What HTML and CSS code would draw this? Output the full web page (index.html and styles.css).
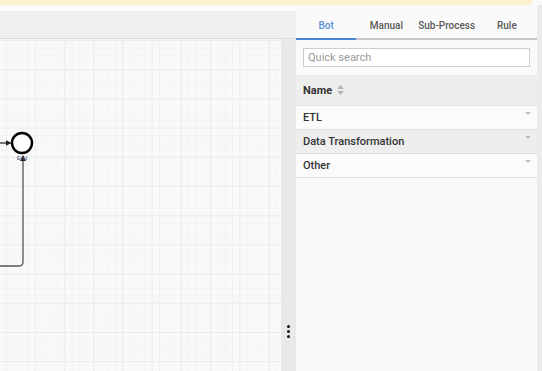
FILE: index.html
```html
<!DOCTYPE html>
<html lang="en">
<head>
  <meta charset="UTF-8">
  <title>Process editor</title>
  <link rel="stylesheet" href="styles.css">
</head>
<body>
  <!-- NOTICE BANNER -->
  <div class="banner"></div>

  <div class="main">
    <!-- EDITOR -->
    <div class="editor">
      <div class="toolbar"></div>
      <div class="workspace">
        <div class="canvas">
          <svg class="diagram" width="281" height="332" viewBox="0 39 281 332">
            <defs>
              <marker id="arrow" markerWidth="6" markerHeight="6" refX="5" refY="3" orient="auto" markerUnits="userSpaceOnUse">
                <path d="M0,0 L6,3 L0,6 Z" fill="#222"/>
              </marker>
            </defs>
            <path d="M0,143 L10.5,143" stroke="#222" stroke-width="1.2" fill="none" marker-end="url(#arrow)"/>
            <path d="M0,266 L19,266 Q23,266 23,262 L23,156" stroke="#555" stroke-width="1.3" fill="none" marker-end="url(#arrow)"/>
            <circle cx="22" cy="143" r="10" fill="#fff" stroke="#000" stroke-width="2.4"/>
            <text x="22" y="160" class="end-label" text-anchor="middle">End</text>
          </svg>
        </div>
        <div class="splitter">
          <div class="dots"><span></span><span></span><span></span></div>
        </div>
      </div>
    </div>

    <!-- SIDE PANEL -->
    <div class="panel">
      <div class="tabs">
        <div class="tab active">Bot</div>
        <div class="tab">Manual</div>
        <div class="tab">Sub-Process</div>
        <div class="tab">Rule</div>
      </div>
      <div class="search">
        <input type="text" placeholder="Quick search">
      </div>
      <div class="list">
        <div class="list-header">
          Name
          <span class="sort">
            <svg width="7" height="10" viewBox="0 0 7 10"><path d="M3.5,0 L7,4 L0,4 Z M0,6 L7,6 L3.5,10 Z" fill="#b5b5b5"/></svg>
          </span>
        </div>
        <div class="row">ETL<span class="caret"></span></div>
        <div class="row alt">Data Transformation<span class="caret"></span></div>
        <div class="row">Other<span class="caret"></span></div>
      </div>
    </div>

    <div class="edge"></div>
  </div>
</body>
</html>
```

FILE: styles.css
```css
body {
  margin: 0;
  width: 542px;
  height: 371px;
  overflow: hidden;
  background: #fafafa;
  font-family: Roboto, "Liberation Sans", sans-serif;
  font-size: 11px;
  color: #333;
}

/* BANNER */
.banner {
  height: 5px;
  width: 532px;
  background: #fdf0cc;
  border-bottom-right-radius: 4px;
}

.main {
  display: flex;
  height: 366px;
}

/* EDITOR */
.editor {
  width: 296px;
  display: flex;
  flex-direction: column;
  padding-top: 6px;
}

.toolbar {
  height: 27px;
  background: #efeff1;
  border-bottom: 1px solid #dcdcde;
}

.workspace {
  flex: 1;
  display: flex;
  min-height: 0;
}

.canvas {
  width: 281px;
  background-color: #f9f9f9;
  background-image:
    linear-gradient(to right, #ececec 1px, transparent 1px),
    linear-gradient(to bottom, #ececec 1px, transparent 1px),
    linear-gradient(to right, #f3f3f3 1px, transparent 1px),
    linear-gradient(to bottom, #f3f3f3 1px, transparent 1px);
  background-size: 29.2px 29.2px, 29.2px 29.2px, 7.3px 7.3px, 7.3px 7.3px;
  background-position: 5.8px 1.1px, 5.8px 1.1px, 5.8px 1.1px, 5.8px 1.1px;
  overflow: hidden;
}

.diagram {
  display: block;
}

.end-label {
  font-size: 6px;
  fill: #4a5a80;
  font-family: "Liberation Sans", sans-serif;
}

.splitter {
  width: 15px;
  background: #e9e9eb;
  display: flex;
  justify-content: center;
  padding-top: 286px;
}

.dots {
  display: flex;
  flex-direction: column;
  gap: 2px;
}

.dots span {
  width: 3px;
  height: 3px;
  border-radius: 50%;
  background: #111;
}

/* PANEL */
.panel {
  width: 241px;
  background: #fafafa;
  display: flex;
  flex-direction: column;
}

.tabs {
  display: flex;
  height: 33px;
  border-bottom: 2px solid #c9c9c9;
}

.tab {
  flex: 1 1 0;
  min-width: 0;
  white-space: nowrap;
  display: flex;
  align-items: center;
  justify-content: center;
  padding-top: 7px;
  font-size: 10px;
  font-weight: 500;
  color: #5a5a5a;
  margin-bottom: -2px;
  border-bottom: 2px solid transparent;
}

.tab.active {
  color: #5b8ed8;
  border-bottom-color: #4a84d6;
}

.search {
  padding: 8px 7px;
  height: 19px;
}

.search input {
  box-sizing: border-box;
  width: 100%;
  height: 19px;
  margin: 0;
  padding: 0 4px;
  border: 1px solid #cfcfcf;
  background: #fff;
  font-family: Roboto, "Liberation Sans", sans-serif;
  font-size: 11px;
  outline: none;
}

.search input::placeholder {
  color: #9a9a9a;
}

.list-header {
  height: 30px;
  background: #eeeeef;
  border-bottom: 1px solid #e2e2e4;
  display: flex;
  align-items: center;
  padding-left: 7px;
  font-weight: bold;
  color: #333;
}

.sort {
  display: flex;
  margin-left: 5px;
}

.row {
  position: relative;
  height: 23px;
  background: #fbfbfb;
  border-bottom: 1px solid #dedee0;
  display: flex;
  align-items: center;
  padding-left: 7px;
  font-weight: 500;
  color: #333;
}

.row.alt {
  background: #eeeeef;
}

.caret {
  position: absolute;
  right: 6px;
  top: 6px;
  width: 0;
  height: 0;
  border-left: 3px solid transparent;
  border-right: 3px solid transparent;
  border-top: 3px solid #bdbdbd;
}

.edge {
  width: 5px;
  background: #ebebee;
}
```
